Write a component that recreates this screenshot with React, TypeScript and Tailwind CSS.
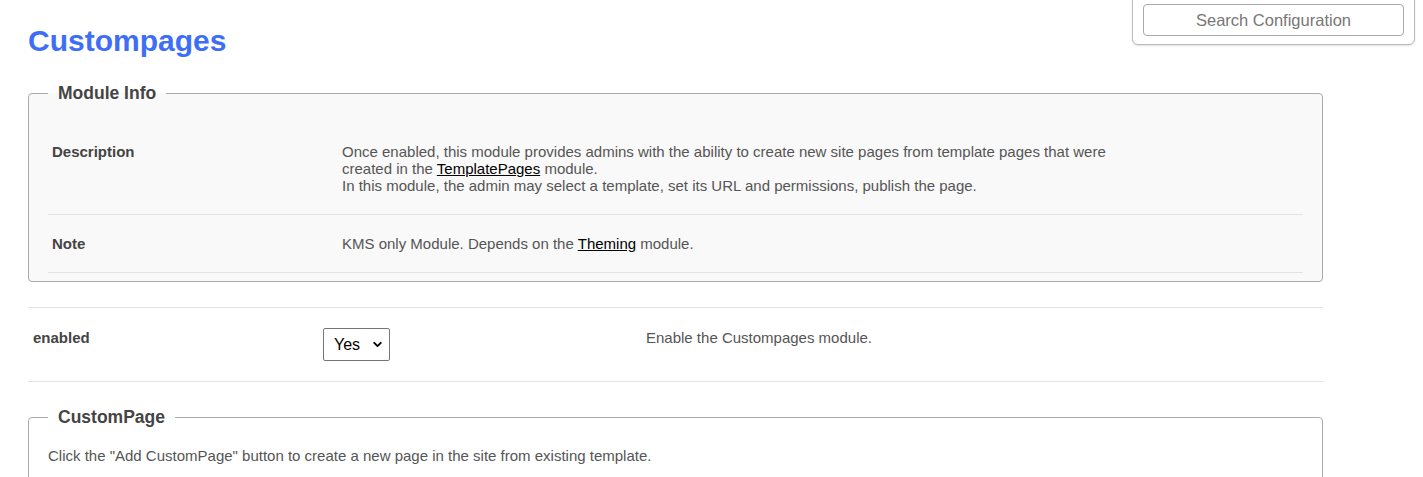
import { ChevronDown } from 'lucide-react';

const font = { fontFamily: '"Liberation Sans", Arial, sans-serif' };

function InfoRow({ label, children }: { label: string; children: React.ReactNode }) {
  return (
    <div className="grid grid-cols-[290px_1fr] border-b border-[#e3e3e3] py-5 text-[15px] leading-[17px]">
      <div className="pl-1 font-bold text-[#444]">{label}</div>
      <div className="pl-1 w-[794px] text-[#555]">{children}</div>
    </div>
  );
}

function SearchPanel() {
  return (
    <div className="absolute right-[8px] top-[-7px] w-[283px] rounded-b-[6px] border border-[#bbb] bg-white px-[10px] pb-[8px] pt-[10px] shadow-[0_1px_2px_rgba(0,0,0,0.12)]">
      <input
        type="text"
        placeholder="Search Configuration"
        className="block h-[32px] w-full rounded-[4px] border border-[#aaa] bg-white text-center text-[16.5px] text-[#777] placeholder:text-[#777] outline-none"
      />
    </div>
  );
}

export default function App() {
  return (
    <div className="relative min-h-[477px] bg-white" style={font}>
      <SearchPanel />
      <div className="ml-[28px] w-[1295px] pt-[26px]">
        <h1 className="text-[30px] font-bold leading-[30px] text-[#3e6ef5]">Custompages</h1>

        {/* Module info */}
        <fieldset className="mt-[27px] rounded-[4px] border border-[#aaa] bg-[#f9f9f9] px-[19px] pb-2">
          <legend className="px-[10px] text-[17.5px] font-bold leading-[20px] text-[#444]">Module Info</legend>
          <div className="pt-5">
            <InfoRow label="Description">
              Once enabled, this module provides admins with the ability to create new site pages from template pages that were
              created in the{' '}
              <a href="#" className="text-black underline">
                TemplatePages
              </a>{' '}
              module.
              <br />
              In this module, the admin may select a template, set its URL and permissions, publish the page.
            </InfoRow>
            <InfoRow label="Note">
              KMS only Module. Depends on the{' '}
              <a href="#" className="text-black underline">
                Theming
              </a>{' '}
              module.
            </InfoRow>
          </div>
        </fieldset>

        {/* enabled setting */}
        <div className="mt-[25px] grid grid-cols-[295px_323px_1fr] border-y border-[#e3e3e3] py-5 text-[15px] leading-[17px]">
          <div className="pl-[5px] pt-[1px] font-bold text-[#444]">enabled</div>
          <div className="relative w-[67px]">
            <select
              defaultValue="yes"
              className="block h-[33px] w-[67px] appearance-none rounded-[2px] border border-[#767676] bg-white pl-[10px] text-[16px] text-black outline-none"
            >
              <option value="yes">Yes</option>
              <option value="no">No</option>
            </select>
            <ChevronDown
              className="pointer-events-none absolute right-[6px] top-[10px] h-[13px] w-[13px] text-black"
              strokeWidth={3.5}
            />
          </div>
          <div className="pt-[1px] text-[#555]">Enable the Custompages module.</div>
        </div>

        {/* CustomPage */}
        <fieldset className="mt-[25px] rounded-[4px] border border-[#aaa] bg-white px-[19px] pb-6">
          <legend className="px-[10px] text-[17.5px] font-bold leading-[20px] text-[#444]">CustomPage</legend>
          <p className="pt-5 text-[15px] leading-[17px] text-[#555]">
            Click the "Add CustomPage" button to create a new page in the site from existing template.
          </p>
        </fieldset>
      </div>
    </div>
  );
}
